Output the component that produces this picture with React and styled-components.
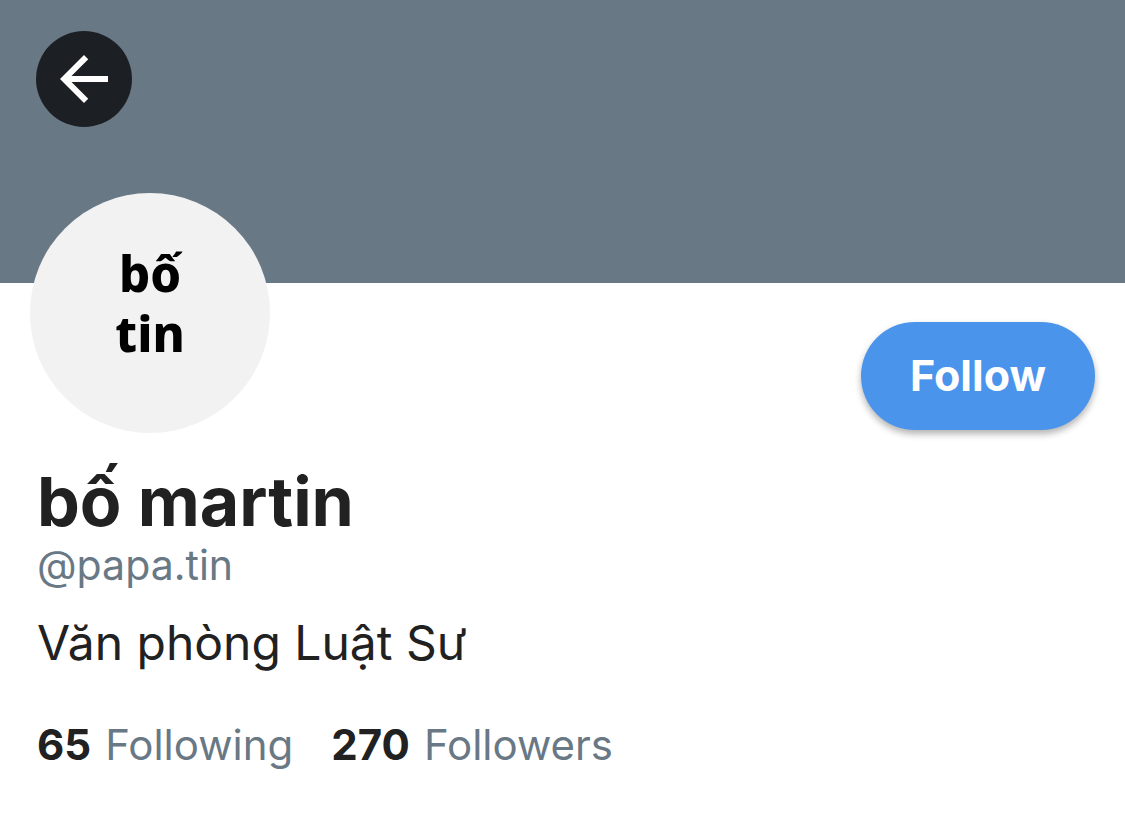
import styled, { createGlobalStyle } from "styled-components";

const GlobalStyle = createGlobalStyle`
* {
    box-sizing: border-box;
}
body {
    margin: 0;
    background: #ffffff;
    color: #212121;
    font-family: Inter, "Liberation Sans", sans-serif;
}
`;

const Banner = styled.header`
height: 283px;
padding: 31px 36px;
background: #697885;
`;

const BackButton = styled.button`
display: flex;
align-items: center;
justify-content: center;
width: 96px;
height: 96px;
padding: 0;
border: none;
border-radius: 50%;
background: #1c2024;
color: white;
cursor: pointer;
& svg{
    width: 72px;
    height: 72px;
    fill: currentColor;
}
`;

const TopRow = styled.div`
display: flex;
flex-direction: row;
align-items: flex-end;
justify-content: space-between;
margin-top: -90px;
padding: 0 30px;
`;

const Avatar = styled.div`
display: flex;
align-items: center;
justify-content: center;
width: 240px;
height: 240px;
padding-bottom: 20px;
border-radius: 50%;
background: #f2f2f2;
color: #000000;
font-family: "Noto Sans", sans-serif;
font-size: 49px;
font-weight: 800;
line-height: 60px;
text-align: center;
`;

const FollowButton = styled.button`
height: 108px;
margin-bottom: 3px;
padding: 0 49px 2px;
border: none;
border-radius: 54px;
background: #4a94ec;
color: white;
font-family: inherit;
font-size: 43px;
font-weight: 700;
cursor: pointer;
box-shadow: 0 4px 7px rgba(0, 0, 0, 0.3);
`;

const Details = styled.section`
padding: 28px 37px;
`;

const Name = styled.h1`
margin: 0;
font-size: 68px;
font-weight: 700;
line-height: 80px;
`;

const Handle = styled.div`
color: #697885;
font-size: 41px;
line-height: 48px;
`;

const Bio = styled.p`
margin: 24px 0 48px;
font-size: 48px;
line-height: 60px;
`;

const Stats = styled.div`
display: flex;
flex-direction: row;
gap: 38px;
`;

const StatLink = styled.a`
display: flex;
gap: 14px;
color: #697885;
font-size: 42px;
line-height: 48px;
text-decoration: none;
& strong{
    color: #212121;
    font-weight: 700;
}
`;

const Stat = (props) => {
    return(
        <StatLink href={props.href}>
            <strong>{props.count}</strong>
            <span>{props.label}</span>
        </StatLink>
    );
};

const App = () => {
    return(
        <>
            <GlobalStyle />
            <Banner>
                <BackButton type="button" aria-label="Back">
                    <svg viewBox="0 0 24 24" aria-hidden="true">
                        <path d="M20 11H7.83l5.59-5.59L12 4l-8 8 8 8 1.41-1.41L7.83 13H20v-2z" />
                    </svg>
                </BackButton>
            </Banner>
            <main>
                <TopRow>
                    <Avatar>bố<br />tin</Avatar>
                    <FollowButton type="button">Follow</FollowButton>
                </TopRow>
                <Details>
                    <Name>bố martin</Name>
                    <Handle>@papa.tin</Handle>
                    <Bio>Văn phòng Luật Sư</Bio>
                    <Stats>
                        <Stat href="#following" count={65} label="Following" />
                        <Stat href="#followers" count={270} label="Followers" />
                    </Stats>
                </Details>
            </main>
        </>
    );
};

export default App;
